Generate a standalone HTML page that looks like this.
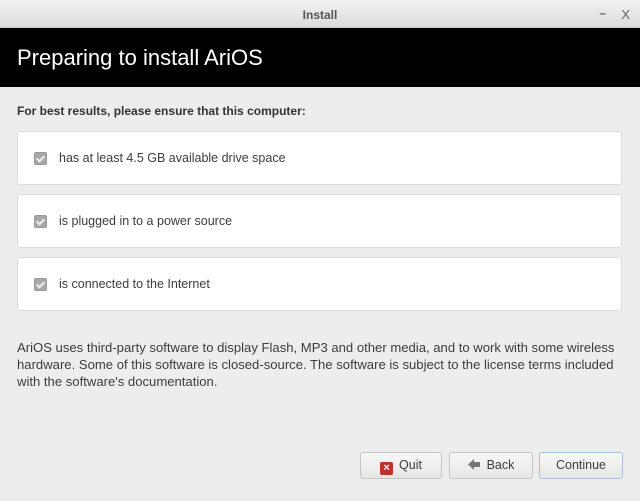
<!DOCTYPE html>
<html><head><meta charset="utf-8"><style>
*{margin:0;padding:0;box-sizing:border-box}
body{width:640px;height:501px;background:#ededed;font-family:"Liberation Sans","DejaVu Sans",sans-serif;font-size:12px;color:#3c3c3c;position:relative;overflow:hidden}
.tb{position:absolute;left:0;top:0;width:640px;height:28px;background:linear-gradient(#f2f2f2,#dcdcdc);border-bottom:1px solid #c8c8c8;text-align:center;line-height:30px;font-weight:bold;color:#555;font-size:12px}
.tb .c{position:absolute;right:10px;top:0;font-weight:normal;color:#666;font-size:13px}
.tb .m{position:absolute;right:34px;top:-2px;font-weight:bold;color:#666}
.hd{position:absolute;left:0;top:28px;width:640px;height:59px;background:#000;color:#fff;font-size:22px;line-height:59px;padding-left:17px}
.lbl{position:absolute;left:17px;top:104px;font-weight:bold;font-size:12px;color:#333}
.box{position:absolute;left:17px;width:605px;height:54px;background:#fff;border:1px solid #dcdcdc;border-radius:3px}
.box .cb{position:absolute;left:16px;top:20px;width:13px;height:13px;background:#a8a8a8;border-radius:2px;border:1px solid #999}
.box .cb:after{content:"";position:absolute;left:3px;top:1px;width:3px;height:6px;border:solid #eee;border-width:0 2px 2px 0;transform:rotate(45deg)}
.box span{position:absolute;left:41px;top:19px;font-size:12.5px;color:#3c3c3c}
.p{position:absolute;left:17px;top:339px;width:623px;white-space:nowrap;line-height:17px;font-size:13.1px;color:#3c3c3c}
.btn{position:absolute;top:452px;height:27px;border:1px solid #c4c4c4;border-radius:3px;background:linear-gradient(#f8f8f8,#e6e6e6);font-size:12.5px;color:#3c3c3c;line-height:25px;text-align:center}
</style></head><body>
<div class="tb">Install<span class="m">–</span><span class="c">X</span></div>
<div class="hd">Preparing to install AriOS</div>
<div class="lbl">For best results, please ensure that this computer:</div>
<div class="box" style="top:131px"><div class="cb"></div><span>has at least 4.5 GB available drive space</span></div>
<div class="box" style="top:194px"><div class="cb"></div><span>is plugged in to a power source</span></div>
<div class="box" style="top:257px"><div class="cb"></div><span>is connected to the Internet</span></div>
<div class="p">AriOS uses third-party software to display Flash, MP3 and other media, and to work with some wireless<br>hardware. Some of this software is closed-source. The software is subject to the license terms included<br>with the software's documentation.</div>
<div class="btn" style="left:360px;width:82px"><span style="display:inline-block;width:13px;height:13px;background:#c0302c;border-radius:2px;color:#fff;font-size:11px;line-height:13px;font-weight:bold;vertical-align:-2px;margin-right:6px">×</span>Quit</div>
<div class="btn" style="left:449px;width:84px"><svg width="13" height="11" viewBox="0 0 13 11" style="vertical-align:-1px;margin-right:6px"><path d="M0 5.5 L6 0 V3 H12 V8 H6 V11 Z" fill="#777"/></svg>Back</div>
<div class="btn" style="left:539px;width:84px;border-color:#a9bdd6">Continue</div>
</body></html>
